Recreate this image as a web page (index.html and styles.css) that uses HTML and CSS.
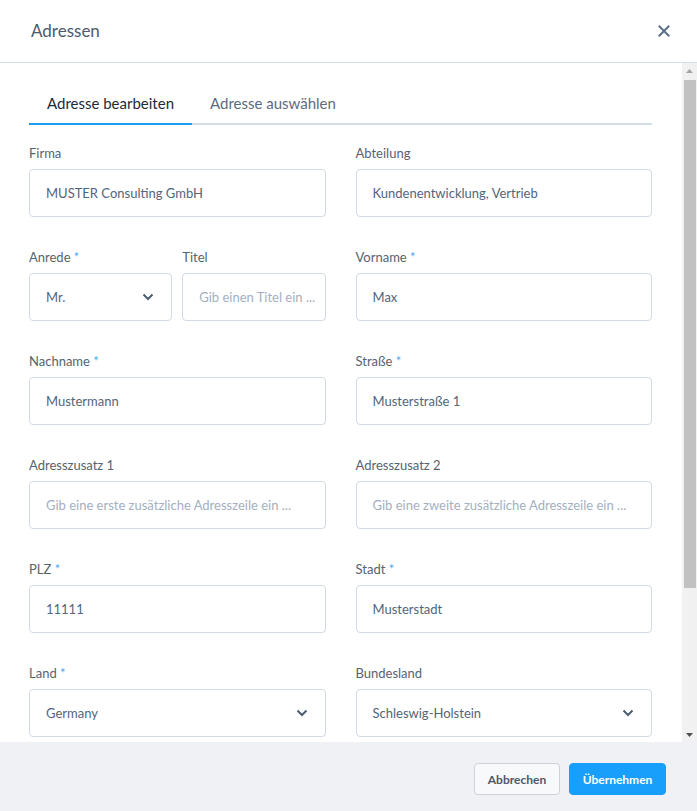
FILE: index.html
```html
<!DOCTYPE html>
<html lang="de">
<head>
<meta charset="utf-8">
<title>Adressen</title>
<link rel="stylesheet" href="styles.css">
</head>
<body>
<div class="modal">
  <header class="modal-header">
    <h1 class="modal-title">Adressen</h1>
    <button class="close-btn" aria-label="Schließen">
      <svg width="12" height="12" viewBox="0 0 12 12"><path d="M1.5 1.5L10.5 10.5M10.5 1.5L1.5 10.5" stroke="#5b6f87" stroke-width="2" stroke-linecap="square" fill="none"/></svg>
    </button>
  </header>
  <div class="modal-body">
    <main class="content">
      <nav class="tabs">
        <div class="tab active">Adresse bearbeiten</div>
        <div class="tab">Adresse auswählen</div>
      </nav>
      <form class="form-grid">
        <div class="field">
          <label class="label">Firma</label>
          <div class="input">MUSTER Consulting GmbH</div>
        </div>
        <div class="field">
          <label class="label">Abteilung</label>
          <div class="input">Kundenentwicklung, Vertrieb</div>
        </div>
        <div class="split">
          <div class="field">
            <label class="label">Anrede <span class="req">*</span></label>
            <div class="input select">Mr.<svg class="chev" width="12" height="8" viewBox="0 0 12 8"><path d="M1.5 1.5L6 6L10.5 1.5" stroke="#4c5d72" stroke-width="2" fill="none"/></svg></div>
          </div>
          <div class="field">
            <label class="label">Titel</label>
            <div class="input placeholder">Gib einen Titel ein ...</div>
          </div>
        </div>
        <div class="field">
          <label class="label">Vorname <span class="req">*</span></label>
          <div class="input">Max</div>
        </div>
        <div class="field">
          <label class="label">Nachname <span class="req">*</span></label>
          <div class="input">Mustermann</div>
        </div>
        <div class="field">
          <label class="label">Straße <span class="req">*</span></label>
          <div class="input">Musterstraße 1</div>
        </div>
        <div class="field">
          <label class="label">Adresszusatz 1</label>
          <div class="input placeholder">Gib eine erste zusätzliche Adresszeile ein ...</div>
        </div>
        <div class="field">
          <label class="label">Adresszusatz 2</label>
          <div class="input placeholder">Gib eine zweite zusätzliche Adresszeile ein ...</div>
        </div>
        <div class="field">
          <label class="label">PLZ <span class="req">*</span></label>
          <div class="input">11111</div>
        </div>
        <div class="field">
          <label class="label">Stadt <span class="req">*</span></label>
          <div class="input">Musterstadt</div>
        </div>
        <div class="field">
          <label class="label">Land <span class="req">*</span></label>
          <div class="input select">Germany<svg class="chev" width="12" height="8" viewBox="0 0 12 8"><path d="M1.5 1.5L6 6L10.5 1.5" stroke="#4c5d72" stroke-width="2" fill="none"/></svg></div>
        </div>
        <div class="field">
          <label class="label">Bundesland</label>
          <div class="input select">Schleswig-Holstein<svg class="chev" width="12" height="8" viewBox="0 0 12 8"><path d="M1.5 1.5L6 6L10.5 1.5" stroke="#4c5d72" stroke-width="2" fill="none"/></svg></div>
        </div>
      </form>
    </main>
    <div class="scrollbar" aria-hidden="true">
      <div class="sb-btn"><svg width="7" height="4" viewBox="0 0 7 4"><path d="M0 4L3.5 0L7 4Z" fill="#a3a3a3"/></svg></div>
      <div class="sb-track"><div class="sb-thumb"></div></div>
      <div class="sb-btn"><svg width="7" height="4" viewBox="0 0 7 4"><path d="M0 0L3.5 4L7 0Z" fill="#505050"/></svg></div>
    </div>
  </div>
  <footer class="modal-footer">
    <button class="btn btn-secondary">Abbrechen</button>
    <button class="btn btn-primary">Übernehmen</button>
  </footer>
</div>
</body>
</html>
```

FILE: styles.css
```css
* { box-sizing: border-box; }
html, body { margin: 0; padding: 0; height: 100%; }
body {
  font-family: "Lato", "Liberation Sans", sans-serif;
  background: #fff;
  color: #52606d;
  overflow: hidden;
}
.modal {
  display: flex;
  flex-direction: column;
  height: 811px;
  width: 697px;
}
.modal-header {
  height: 63px;
  flex: none;
  display: flex;
  align-items: center;
  justify-content: space-between;
  padding: 0 27px 0 31px;
  border-bottom: 1px solid #d5dde6;
}
.modal-title {
  margin: 0;
  font-size: 17px;
  font-weight: 400;
  color: #4b5a6d;
  padding-bottom: 1px;
}
.close-btn {
  border: 0;
  background: none;
  padding: 0;
  width: 12px;
  height: 12px;
  display: flex;
}
.modal-body {
  flex: 1;
  min-height: 0;
  display: flex;
}
.content {
  flex: 1;
  min-width: 0;
  overflow: hidden;
  padding: 20px 30px 0 29px;
}
.scrollbar {
  flex: none;
  width: 15px;
  background: #f1f1f1;
  display: flex;
  flex-direction: column;
}
.sb-btn {
  height: 15px;
  flex: none;
  display: flex;
  align-items: center;
  justify-content: center;
}
.sb-track {
  flex: 1;
  padding: 2px 1px 0 2px;
}
.sb-thumb {
  height: 508px;
  background: #c1c1c1;
}
.tabs {
  display: flex;
  border-bottom: 2px solid #d5dde6;
}
.tab {
  padding: 10px 18px;
  line-height: 20px;
  font-size: 15px;
  color: #5c6b7e;
  margin-bottom: -2px;
  border-bottom: 2px solid transparent;
}
.tab.active {
  color: #1f2a37;
  border-bottom-color: #1d9bf0;
}
.form-grid {
  display: grid;
  grid-template-columns: 1fr 1fr;
  column-gap: 30px;
  row-gap: 31px;
  margin-top: 19px;
}
.split {
  display: grid;
  grid-template-columns: 1fr 1fr;
  column-gap: 10px;
}
.field {
  display: flex;
  flex-direction: column;
  min-width: 0;
}
.label {
  font-size: 13px;
  line-height: 18px;
  color: #55636f;
  margin-bottom: 7px;
}
.req { color: #4aa8f5; }
.input {
  height: 48px;
  border: 1px solid #d3dae3;
  border-radius: 4px;
  padding: 0 16px;
  display: flex;
  align-items: center;
  font-size: 13px;
  color: #52657a;
  white-space: nowrap;
  overflow: hidden;
}
.input.placeholder { color: #a3afbf; }
.input.select { justify-content: space-between; padding-right: 17px; }
.chev { flex: none; }
.modal-footer {
  flex: none;
  height: 69px;
  background: #f0f1f5;
  display: flex;
  justify-content: flex-end;
  align-items: flex-start;
  gap: 9px;
  padding: 21px 31px 0 0;
}
.btn {
  height: 32px;
  border-radius: 4px;
  font-family: inherit;
  font-size: 12px;
  font-weight: 700;
  padding: 0 10px;
  white-space: nowrap;
}
.btn-secondary {
  width: 86px;
  background: #f8f9fb;
  border: 1px solid #ccd3dc;
  color: #4c5868;
}
.btn-primary {
  width: 97px;
  background: #189ffb;
  border: 1px solid #189ffb;
  color: #fff;
}
```
